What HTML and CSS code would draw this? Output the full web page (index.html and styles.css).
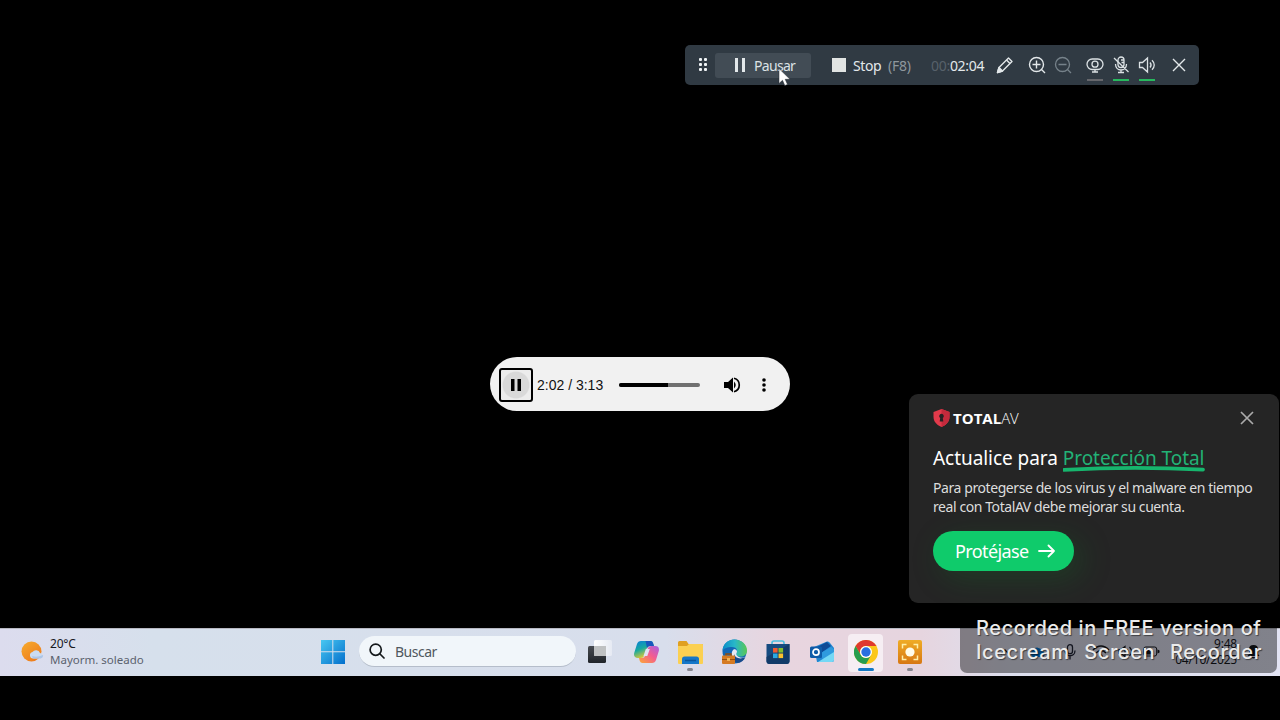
FILE: index.html
```html
<!DOCTYPE html>
<html lang="es">
<head>
  <meta charset="UTF-8" />
  <title>Escritorio</title>
  <meta name="viewport" content="width=device-width, initial-scale=1.0" />
  <link rel="stylesheet" href="styles.css">
</head>
<body>

<!-- Barra de grabación -->
<div class="recorder">
  <svg class="grip" width="8" height="14" viewBox="0 0 8 14" fill="#f0f4f6"><rect width="3" height="3" rx="1"/><rect x="5" width="3" height="3" rx="1"/><rect y="5" width="3" height="3" rx="1"/><rect x="5" y="5" width="3" height="3" rx="1"/><rect y="10" width="3" height="3" rx="1"/><rect x="5" y="10" width="3" height="3" rx="1"/></svg>
  <button class="rec-pause">
    <svg width="11" height="14" viewBox="0 0 11 14" fill="#e3e8ea"><rect width="3" height="14"/><rect x="7" width="3" height="14"/></svg>
    <span>Pausar</span>
  </button>
  <span class="stop-square"></span>
  <span class="rec-stop">Stop</span>
  <span class="rec-key">(F8)</span>
  <span class="rec-time"><span class="dim">00:</span>02:04</span>
  <div class="rec-icons">
    <svg width="18" height="18" viewBox="0 0 18 18" fill="none" stroke="#e3e8ea" stroke-width="1.4" stroke-linejoin="round"><path d="M1.500 16.500l1.500-5L12.500 2l3.500 3.500L6.500 15z"/><path d="M10.500 4l3.500 3.500"/><path d="M1.500 16.500L3 11.500l3.500 3.500z" fill="#e3e8ea"/></svg>
    <svg width="18" height="18" viewBox="0 0 18 18" fill="none" stroke="#e3e8ea" stroke-width="1.4"><circle cx="8.500" cy="8.500" r="7"/><path d="M4.500 8.500h8M8.500 4.500v8M13.500 13.500l3.500 3.500"/></svg>
    <svg width="18" height="18" viewBox="0 0 18 18" fill="none" stroke="#76828a" stroke-width="1.3"><circle cx="8.500" cy="8.500" r="7"/><path d="M4.500 8.500h8M13.500 13.500l3.500 3.500"/></svg>
    <span class="source off"><svg width="18" height="18" viewBox="0 0 18 18" fill="none" stroke="#dce2e5" stroke-width="1.3"><rect x="1" y="3" width="16" height="10.500" rx="5.200"/><circle cx="9" cy="8.200" r="3"/><path d="M9 13.500v2M6 16h6"/></svg></span>
    <span class="source"><svg width="18" height="18" viewBox="0 0 18 18" fill="none" stroke="#dce2e5" stroke-width="1.3"><rect x="6" y="1" width="6" height="10.500" rx="3"/><path d="M3.500 8c0 8 11 8 11 0M9 14v2.500M6 16.500h6M2 2l14.500 14M9 4h3M9.500 6.500h2.500"/></svg></span>
    <span class="source"><svg width="18" height="18" viewBox="0 0 18 18" fill="none" stroke="#dce2e5" stroke-width="1.3"><path d="M1.500 6.500v5h3l5 4.500V2l-5 4.500zM12 6.500c1.300 1.500 1.300 3.500 0 5M14 4.300c3 3 3 6.500 0 9.400"/></svg></span>
    <svg class="rec-close" width="14" height="14" viewBox="0 0 14 14" fill="none" stroke="#e3e8ea" stroke-width="1.4"><path d="M1 1l12 12M13 1L1 13"/></svg>
  </div>
</div>
<svg class="cursor" width="13" height="19" viewBox="0 0 13 19"><path d="M1 .5v15l3.500-3.200 2.300 5.300 2.700-1.200-2.300-5.100H12z" fill="#fff" stroke="#222b30" stroke-width=".5"/></svg>

<!-- Reproductor de audio -->
<div class="player">
  <button class="play"><svg width="12" height="12" viewBox="0 0 12 12"><path d="M1 0h3.500v12H1zM7.500 0H11v12H7.500z"/></svg></button>
  <span class="time">2:02 / 3:13</span>
  <div class="track"><div class="track-fill"></div></div>
  <svg class="volume" width="17" height="16" viewBox="0 0 17 16"><path d="M0 5v6h4l5 4.500V.5L4 5z"/><path d="M10 4.500q3.500 3.500 0 7z"/><path d="M10 1.300c7 1.800 7 11.600 0 13.400" fill="none" stroke="#000" stroke-width="1.700"/></svg>
  <svg class="more" width="4" height="14" viewBox="0 0 4 14"><circle cx="2" cy="2" r="1.800"/><circle cx="2" cy="7" r="1.800"/><circle cx="2" cy="12" r="1.800"/></svg>
</div>

<!-- Aviso del antivirus -->
<div class="notice">
  <div class="notice-head">
    <svg width="17" height="18" viewBox="0 0 17 18"><path d="M8.500 0l8 3v5c0 5-4 8.500-8 10-4-1.500-8-5-8-10V3z" fill="#e23a4b"/><path d="M8.500 0l8 3v5c0 5-4 8.500-8 10z" fill="#c42a3c"/><path d="M8.500 4.800a2.300 2.300 0 0 1 1.300 4.200l.5 3.500H6.700L7.200 9a2.300 2.300 0 0 1 1.300-4.200z" fill="#262223"/></svg>
    <span class="brand"><b>TOTAL</b><span>AV</span></span>
    <svg class="notice-close" width="14" height="14" viewBox="0 0 14 14" fill="none" stroke="#aaa" stroke-width="1.7"><path d="M1 1l12 12M13 1L1 13"/></svg>
  </div>
  <h2>Actualice para <span class="green">Protección Total<svg width="142" height="7" viewBox="0 0 142 7"><path d="M1 4.800Q70 1.200 140 4.600" fill="none" stroke="#16b56d" stroke-width="3.700" stroke-linecap="round"/></svg></span></h2>
  <p>Para protegerse de los virus y el malware en tiempo<br>real con TotalAV debe mejorar su cuenta.</p>
  <button class="protect"><span>Protéjase</span><svg width="17" height="14" viewBox="0 0 17 14" fill="none" stroke="#fff" stroke-width="1.8" stroke-linecap="round" stroke-linejoin="round"><path d="M1 7h15M10.500 1.500L16 7l-5.500 5.500"/></svg></button>
</div>

<!-- Barra de tareas -->
<div class="taskbar">
  <div class="weather">
    <svg width="23" height="22" viewBox="0 0 23 22"><defs><linearGradient id="sun" x2=".7" y2="1"><stop stop-color="#f6ac2f"/><stop offset="1" stop-color="#ee7c1c"/></linearGradient></defs><circle cx="10.500" cy="10.500" r="10" fill="url(#sun)"/><path d="M12 17.500a3.300 3.300 0 0 1-.5-6.500 4.300 4.300 0 0 1 7.500 1 2.800 2.800 0 0 1 .5 5.500z" fill="#cadcf2"/><path d="M11 15q5 2 11-1a2.800 2.800 0 0 1-2.500 3.500H12z" fill="#adc6e8"/></svg>
    <div><div class="temp">20°C</div><div class="sky">Mayorm. soleado</div></div>
  </div>
  <div class="apps">
    <svg class="start" width="24" height="24" viewBox="0 0 24 24"><defs><linearGradient id="win" x2="1" y2="1"><stop stop-color="#48c7f1"/><stop offset="1" stop-color="#036fcc"/></linearGradient></defs><path d="M0 0h11.300v11.300H0zM12.300 0H24v11.300H12.300zM0 12.300h11.300V24H0zM12.300 12.300H24V24H12.300z" fill="url(#win)"/></svg>
    <div class="search"><svg width="16" height="16" viewBox="0 0 16 16" fill="none" stroke="#15191c" stroke-width="1.7" stroke-linecap="round"><circle cx="6.700" cy="6.700" r="5.600"/><path d="M11 11l4 4"/></svg><span>Buscar</span></div>
    <div class="app view"><svg width="24" height="23" viewBox="0 0 24 23"><defs><linearGradient id="tv" y2="1" x2="0"><stop stop-color="#484b51"/><stop offset="1" stop-color="#202429"/></linearGradient><linearGradient id="tv2" x2="1"><stop stop-color="#fff"/><stop offset="1" stop-color="#e6eaf3"/></linearGradient></defs><rect y="6" width="18" height="17" rx="1.500" fill="url(#tv)"/><rect x="6" y="0" width="18" height="16" rx="1.500" fill="url(#tv2)"/><path d="M6 6h12v10H7.500Q6 16 6 14.500z" fill="#bfc1c2"/></svg></div>
    <div class="app"><svg width="25" height="24" viewBox="0 0 25 24"><defs><linearGradient id="c1" x2=".5" y2="1"><stop stop-color="#087bdc"/><stop offset=".5" stop-color="#16a9a0"/><stop offset="1" stop-color="#f4cd28"/></linearGradient><linearGradient id="c2" x1="1" x2=".1" y2="1"><stop stop-color="#a65fe4"/><stop offset=".5" stop-color="#f45d8f"/><stop offset="1" stop-color="#fba33b"/></linearGradient></defs><path d="M7 1h9.500q2 0 2.500 2l1 3h-4q-2.500 0-3.300 2.500l-2.500 7Q9.500 18 7 18H4Q-.8 18 .2 13L3 4q1-3 4-3z" fill="url(#c1)"/><path d="M18 23H8.500q-2 0-2.700-2L5 18h3q2.500 0 3.300-2.500l2.500-7Q14.500 6 17 6h4q4.800 0 3.800 5L22 20q-1 3-4 3z" fill="url(#c2)"/><path d="M11.500 1h5q2 0 2.500 2l1 3h-4q-2 0-3 2z" fill="#1856bd"/><path d="M11.800 9h4l-2.500 7H9.500z" fill="#e0e4f2"/></svg></div>
    <div class="app"><svg width="25" height="24" viewBox="0 0 25 24"><path d="M0 2.500Q0 1 1.500 1h7l2 3h13q1.500 0 1.500 1v17q0 1-1 1H1q-1 0-1-1z" fill="#e0a020"/><path d="M0 6h9l2-2h13q1 0 1 1v18q0 1-1 1H1q-1 0-1-1z" fill="#fbd052"/><path d="M4 24v-5q0-2.500 2.500-2.500h12q2.500 0 2.500 2.500v5z" fill="#1677c8"/><path d="M7 20.500h11" stroke="#0b559b" stroke-width="1.500"/></svg><i></i></div>
    <div class="app"><svg width="25" height="25" viewBox="0 0 25 25"><defs><linearGradient id="e1" x2="1"><stop stop-color="#0b8cc7"/><stop offset=".5" stop-color="#28b7c9"/><stop offset="1" stop-color="#59c853"/></linearGradient></defs><circle cx="12.500" cy="12.500" r="12" fill="#1267b6"/><path d="M.5 12C1 4.500 6 .5 12.500.5c7 0 12.500 5 12.500 11 0 4-3 6-6.500 6-4 0-5.500-1.500-4-3.500 2-3-.5-6-4.500-6C5.500 8 2 9 .5 12z" fill="url(#e1)"/><path d="M11.500 10.500c-4 4-1 11 5.500 11 3 0 5.500-1.500 7-3.500-3.500 1.500-9 .5-9.700-2.500-.3-1 .9-2 .7-3-.4-1.700-1.500-2.700-3.500-2z" fill="#e6e9f3"/><path d="M12 15c1 4 6 6 11.500 3-2 5-7 7-11 5z" fill="#174a8c"/><path d="M4 17v-2h5v2" fill="none" stroke="#8e4f12" stroke-width="1.500"/><rect y="16.500" width="13" height="8.500" rx="1" fill="#d57a22"/><path d="M0 20h13v1H0z" fill="#94500f"/><path d="M5 19h3v3H5z" fill="#f1b455"/></svg></div>
    <div class="app"><svg width="24" height="24" viewBox="0 0 24 24"><path d="M6 5V3q0-2 2-2h8q2 0 2 2v2" fill="none" stroke="#49bfe1" stroke-width="1.600"/><path d="M.5 4h23v17q0 3-3 3h-17q-3 0-3-3z" fill="#164b80"/><path d="M.5 17l23-13v17q0 3-3 3h-17q-3 0-3-3z" fill="#123b69"/><path d="M7 8h4.600v4.600H7z" fill="#ef5b32"/><path d="M12.500 8h4.600v4.600h-4.600z" fill="#86bd2c"/><path d="M7 13.500h4.600v4.600H7z" fill="#28a8e3"/><path d="M12.500 13.500h4.600v4.600h-4.600z" fill="#fbc12e"/></svg></div>
    <div class="app"><svg width="24" height="22" viewBox="0 0 24 22"><path d="M4 6L17 .5q2-.5 3 1.500l4 5v12q0 2-2 2H7z" fill="#2185d0"/><path d="M7 6l10-5 4 4-10 7z" fill="#0e4b96"/><path d="M11 12l10-6 3 2v6l-11 6z" fill="#2f9ade"/><path d="M8 21l16-10v8q0 2-2 2z" fill="#74d8f5"/><rect y="5.500" width="12" height="11.500" rx="1.500" fill="#0e5ba8"/><circle cx="6" cy="11.200" r="3" fill="none" stroke="#fff" stroke-width="1.700"/></svg></div>
    <div class="app active"><svg width="24" height="24" viewBox="0 0 24 24"><circle cx="12" cy="12" r="12" fill="#fbc719"/><path d="M1.600 6A12 12 0 0 1 22.400 6H12a6 6 0 0 0-5.200 9z" fill="#df392f"/><path d="M1.600 6A12 12 0 0 0 12 24l5.200-9a6 6 0 0 1-10.400 0z" fill="#279d4e"/><circle cx="12" cy="12" r="6" fill="#fff"/><circle cx="12" cy="12" r="4.700" fill="#286fdf"/></svg><i></i></div>
    <div class="app"><svg width="24" height="24" viewBox="0 0 24 24"><defs><linearGradient id="ice" x2="0" y2="1"><stop stop-color="#efac25"/><stop offset="1" stop-color="#d77712"/></linearGradient></defs><rect width="24" height="24" rx="2" fill="url(#ice)"/><circle cx="12" cy="12" r="4.600" fill="#fffce9"/><path d="M4.500 8.500v-4h4M15.500 4.500h4v4M19.500 15.500v4h-4M8.500 19.500h-4v-4" fill="none" stroke="#fff0a8" stroke-width="1.500"/></svg><i></i></div>
  </div>
  <div class="tray">
    <svg width="10" height="8" viewBox="0 0 10 8" fill="none" stroke="#222" stroke-width="1.3"><path d="M1 6l4-4 4 4"/></svg>
    <svg class="cloud" width="18" height="12" viewBox="0 0 18 12"><path d="M4 11a4 4 0 0 1 0-7 5 5 0 0 1 9 1 3.200 3.200 0 0 1 1 6z" fill="#0079d8"/></svg>
    <svg class="mic" width="12" height="16" viewBox="0 0 12 16" fill="none" stroke="#222638" stroke-width="1.3"><rect x="3.500" y=".7" width="5" height="9" rx="2.500"/><path d="M1 6.500c0 7 10 7 10 0M6 12v3.500"/></svg>
    <svg class="wifi" width="18" height="13" viewBox="0 0 18 13" fill="none" stroke="#15171d" stroke-width="1.5"><path d="M1 5q8-8 16 0M4 8q5-5 10 0"/><circle cx="9" cy="11" r="1"/></svg>
    <svg width="15" height="13" viewBox="0 0 15 13" fill="none" stroke="#15171d" stroke-width="1.2"><path d="M1 4.500v4h2l4 3v-10l-4 3zM9 4q2 2.500 0 5M11.500 2q4 4.500 0 9"/></svg>
    <svg class="battery" width="17" height="11" viewBox="0 0 17 11"><rect x=".7" y="1" width="13" height="9" rx="2" fill="none" stroke="#15171d"/><path d="M2 2.500h7v6H2zM14.500 3.500l2 1v2l-2 1z" fill="#15171d"/></svg>
    <div class="clock"><div>9:48</div><div>04/10/2025</div></div>
    <svg class="bell" width="13" height="15" viewBox="0 0 13 15" fill="#15171d"><path d="M2 10V5q0-4 4.500-4T11 5v5l1.500 2h-12zM4.500 13h4q-2 3-4 0z"/></svg>
  </div>
</div>

<!-- Marca de agua -->
<div class="watermark">
  <div class="wm1">Recorded in FREE version of</div>
  <div class="wm2"><span>Icecream</span><span>Screen</span><span>Recorder</span></div>
</div>

</body>
</html>
```
FILE: styles.css
```css
* {
  box-sizing: border-box;
}

body {
  width: 1280px;
  height: 720px;
  margin: 0;
  padding-bottom: 44px;
  display: flex;
  flex-direction: column;
  justify-content: flex-end;
  position: relative;
  overflow: hidden;
  background: #000;
  font-family: "Noto Sans", "Open Sans", sans-serif;
}

svg {
  display: block;
  flex: none;
}

button {
  border: none;
  padding: 0;
  font-family: inherit;
  display: flex;
  align-items: center;
}

span, h2, .temp, .sky, .clock, .wm1 {
  white-space: nowrap;
}

/* Barra de grabación */
.recorder {
  position: absolute;
  left: 685px;
  top: 45px;
  width: 514px;
  height: 40px;
  padding-left: 14px;
  display: flex;
  align-items: center;
  background: #303a43;
  border-radius: 5px;
  color: #e3e8ea;
  font-size: 14px;
}

.rec-pause {
  width: 96px;
  height: 25px;
  margin-left: 8px;
  padding-left: 20px;
  gap: 8px;
  background: #424c55;
  border-radius: 3px;
  color: #dce2e5;
  font-size: 14px;
  letter-spacing: -0.7px;
}

.stop-square {
  width: 14px;
  height: 14px;
  margin-left: 21px;
  background: #e1e4e3;
}

.rec-stop {
  width: 35px;
  margin-left: 7px;
  letter-spacing: -0.4px;
}

.rec-key {
  width: 43px;
  color: #8e979d;
  letter-spacing: -0.2px;
}

.rec-time {
  width: 65px;
  letter-spacing: -0.3px;
}

.dim {
  color: #57616a;
}

.rec-icons {
  display: flex;
  align-items: center;
  gap: 8px;
}

.rec-icons > svg:first-child {
  margin-right: 6px;
}

.source {
  position: relative;
}

.source::after {
  content: "";
  position: absolute;
  left: 1px;
  top: 23px;
  width: 16px;
  height: 2px;
  background: #27b95e;
}

.off {
  margin-left: 6px;
}

.source.off::after {
  background: #66676c;
}

.rec-close {
  margin-left: 8px;
}

.cursor {
  position: absolute;
  left: 778px;
  top: 68px;
}

/* Reproductor */
.player {
  position: absolute;
  left: 490px;
  top: 357px;
  width: 300px;
  height: 54px;
  padding: 1px 0 0 9px;
  display: flex;
  align-items: center;
  background: #f1f1f1;
  border-radius: 27px;
}

.play {
  width: 34px;
  height: 34px;
  justify-content: center;
  border: 2px solid #000;
  border-radius: 3px;
  background: radial-gradient(circle, #d9d9d9 60%, #ececec 66%);
}

.time {
  width: 82px;
  padding-left: 4px;
  font: 14px "Liberation Sans", sans-serif;
  color: #111;
}

.track {
  width: 81px;
  height: 4px;
  margin-left: 4px;
  border-radius: 2px;
  overflow: hidden;
  background: #707070;
}

.track-fill {
  width: 60%;
  height: 100%;
  background: #000;
}

.volume {
  margin-left: 24px;
}

.more {
  margin-left: 21px;
}

/* Aviso */
.notice {
  position: absolute;
  left: 909px;
  top: 394px;
  width: 370px;
  height: 209px;
  padding: 14px 25px 0 24px;
  background: #252525;
  border-radius: 9px;
  color: #fff;
}

.notice-head {
  height: 19px;
  display: flex;
  align-items: center;
}

.brand {
  margin-left: 3px;
  font-size: 15px;
  font-family: "Open Sans", sans-serif;
}

.brand span {
  font-weight: 300;
  letter-spacing: -0.1px;
}

.notice-close {
  margin-left: auto;
}

.notice h2 {
  margin: 16px 0 0;
  font-size: 19px;
  line-height: 30px;
  font-weight: 400;
  letter-spacing: -0.05px;
}

.green {
  position: relative;
  color: #22b276;
}

.green svg {
  position: absolute;
  left: 0;
  bottom: -1px;
}

.notice p {
  margin: 5px 0 0;
  font-size: 14px;
  line-height: 19px;
  color: #ddd;
  letter-spacing: -0.42px;
}

.protect {
  width: 141px;
  height: 40px;
  margin-top: 15px;
  padding-left: 22px;
  gap: 9px;
  border-radius: 20px;
  background: #0fcb6b;
  box-shadow: 8px 8px 30px rgba(20, 110, 40, 0.3);
  color: #fff;
  font-size: 18px;
  letter-spacing: -0.6px;
}

/* Barra de tareas */
.taskbar {
  height: 48px;
  padding-bottom: 2px;
  display: flex;
  border-top: 1px solid #b7b8c2;
  background: linear-gradient(90deg, #dcdcee 0, #d6e0ec 12%, #d8deec 52%, #e8d5df 61%, #e6d5df 72%, #dddfee 79%, #e3e4f4);
}

.weather {
  width: 321px;
  padding-left: 21px;
  display: flex;
  align-items: center;
  gap: 6px;
  font-size: 12px;
  line-height: 16px;
  color: #17191f;
}

.temp {
  letter-spacing: -0.2px;
}

.sky {
  color: #5b626e;
  font-size: 11.5px;
}

.apps {
  width: 639px;
  display: flex;
  align-items: center;
}

.search {
  width: 217px;
  height: 31px;
  margin-left: 14px;
  padding-left: 10px;
  display: flex;
  align-items: center;
  gap: 10px;
  border-radius: 16px;
  background: #f1f6fa;
  border-bottom: 1px solid #b5bdca;
  color: #50585e;
  font-size: 14px;
}

.search span {
  letter-spacing: -0.5px;
}

.app {
  position: relative;
  width: 44px;
  height: 45px;
  display: flex;
  align-items: center;
  justify-content: center;
}

.view {
  width: 48px;
}

.app i {
  position: absolute;
  bottom: 3px;
  left: 19px;
  width: 6px;
  height: 3px;
  border-radius: 2px;
  background: #85858e;
}

.active::before {
  content: "";
  position: absolute;
  left: 4px;
  top: 5px;
  width: 35px;
  height: 38px;
  border-radius: 4px;
  background: #f6eef3;
}

.active svg {
  position: relative;
}

.active i {
  left: 14px;
  width: 16px;
  background: #1478c3;
}

.tray {
  width: 320px;
  padding-left: 40px;
  display: flex;
  align-items: center;
  gap: 8px;
}

.cloud {
  margin-left: 11px;
}

.mic {
  margin-left: 9px;
}

.wifi {
  margin-left: 8px;
}

.battery, .bell {
  margin-left: 2px;
}

.clock {
  width: 69px;
  font-size: 12px;
  line-height: 16px;
  color: #15171d;
  letter-spacing: -0.2px;
  text-align: right;
}

/* Marca de agua */
.watermark {
  position: absolute;
  left: 960px;
  top: 612px;
  width: 317px;
  height: 61px;
  padding: 4px 0 0 16px;
  border-radius: 7px;
  background: rgba(0, 0, 0, 0.43);
  color: #ebebeb;
  font-family: "Inter", sans-serif;
  font-weight: 500;
  font-size: 20px;
  line-height: 24px;
  text-shadow: 1px 1px 1px rgba(0, 0, 0, 0.5);
}

.wm1 {
  letter-spacing: 0.6px;
}

.wm2 {
  width: 286px;
  display: flex;
  justify-content: space-between;
  letter-spacing: 0.6px;
}
```
